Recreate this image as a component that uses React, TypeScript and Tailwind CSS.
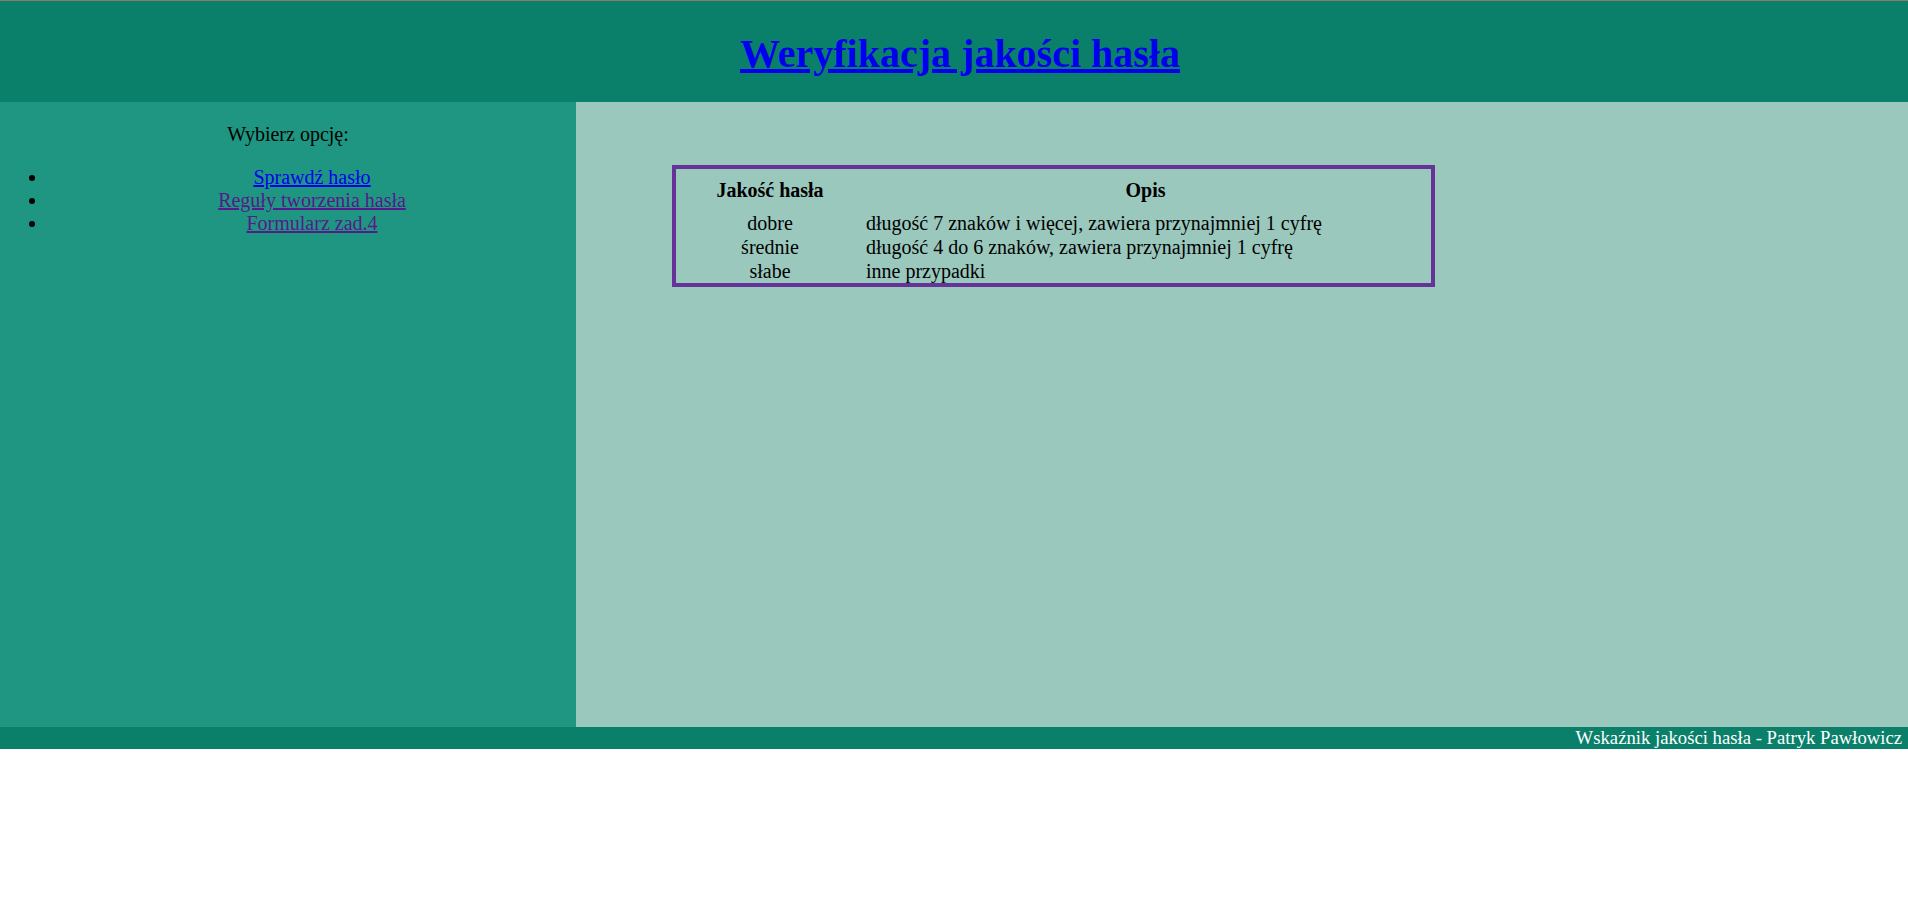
import React from "react";

export default function App() {
  const rows = [
    ["dobre", "długość 7 znaków i więcej, zawiera przynajmniej 1 cyfrę"],
    ["średnie", "długość 4 do 6 znaków, zawiera przynajmniej 1 cyfrę"],
    ["słabe", "inne przypadki"],
  ];
  return (
    <div
      className="w-full text-black text-[20px] leading-[23px]"
      style={{ fontFamily: '"Liberation Serif", "Times New Roman", serif' }}
    >
      <header className="h-[102px] bg-[#0a806a] border-t border-[#8a7a68] flex items-start justify-center pl-[12px]">
        <h1 className="mt-[30px] text-[40px] leading-[46px] font-bold">
          <a href="#" className="text-[#0000ee] underline">
            Weryfikacja jakości hasła
          </a>
        </h1>
      </header>
      <div className="flex h-[625px]">
        <aside className="w-[576px] shrink-0 bg-[#1f9681]">
          <p className="text-center mt-[21px]">Wybierz opcję:</p>
          <ul className="list-disc pl-[48px] mt-[20px]">
            <li className="text-center">
              <a href="#" className="text-[#0000ee] underline">
                Sprawdź hasło
              </a>
            </li>
            <li className="text-center">
              <a href="#" className="text-[#551a8b] underline">
                Reguły tworzenia hasła
              </a>
            </li>
            <li className="text-center">
              <a href="#" className="text-[#551a8b] underline">
                Formularz zad.4
              </a>
            </li>
          </ul>
        </aside>
        <main className="flex-1 bg-[#9ac8bd] pl-[96px] pt-[63px]">
          <div className="w-[763px] border-4 border-[#663399] pl-[2px] pr-[2px]">
            <div className="grid grid-cols-[184px_1fr] h-[42px] items-center font-bold">
              <div className="text-center">Jakość hasła</div>
              <div className="text-center">Opis</div>
            </div>
            {rows.map(([q, d]) => (
              <div key={q} className="grid grid-cols-[184px_1fr] h-[24px] items-center">
                <div className="text-center">{q}</div>
                <div className="pl-[4px]">{d}</div>
              </div>
            ))}
          </div>
        </main>
      </div>
      <footer className="h-[22px] bg-[#0a806a] text-white text-right pr-[6px] text-[18.7px] leading-[22px]">
        Wskaźnik jakości hasła - Patryk Pawłowicz
      </footer>
    </div>
  );
}
